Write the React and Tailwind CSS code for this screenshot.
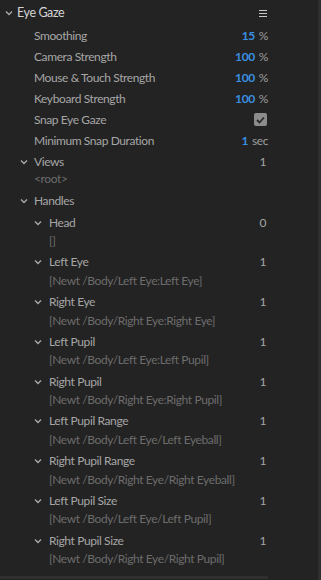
import React from 'react';

const Chevron = () => (
  <svg width="8" height="6" viewBox="0 0 8 6" className="shrink-0">
    <path d="M1 1.5 L4 4.5 L7 1.5" fill="none" stroke="#a8a8a8" strokeWidth="1.4" />
  </svg>
);

const params = [
  { label: 'Smoothing', value: '15', unit: '%' },
  { label: 'Camera Strength', value: '100', unit: '%' },
  { label: 'Mouse & Touch Strength', value: '100', unit: '%' },
  { label: 'Keyboard Strength', value: '100', unit: '%' },
  { label: 'Snap Eye Gaze', check: true },
  { label: 'Minimum Snap Duration', value: '1', unit: 'sec' },
];

const handles = [
  { name: 'Head', count: '0', path: '[]' },
  { name: 'Left Eye', count: '1', path: '[Newt /Body/Left Eye:Left Eye]' },
  { name: 'Right Eye', count: '1', path: '[Newt /Body/Right Eye:Right Eye]' },
  { name: 'Left Pupil', count: '1', path: '[Newt /Body/Left Eye:Left Pupil]' },
  { name: 'Right Pupil', count: '1', path: '[Newt /Body/Right Eye:Right Pupil]' },
  { name: 'Left Pupil Range', count: '1', path: '[Newt /Body/Left Eye/Left Eyeball]' },
  { name: 'Right Pupil Range', count: '1', path: '[Newt /Body/Right Eye/Right Eyeball]' },
  { name: 'Left Pupil Size', count: '1', path: '[Newt /Body/Left Eye/Left Pupil]' },
  { name: 'Right Pupil Size', count: '1', path: '[Newt /Body/Right Eye/Right Pupil]' },
];

export default function App() {
  return (
    <div className="w-[321px] h-[580px] bg-[#232323] flex overflow-hidden text-[12px] tracking-[-0.4px] text-[#a6a6a6]" style={{ fontFamily: 'Lato, "Open Sans", sans-serif' }}>
      <div className="flex-1 flex flex-col">
        <div className="flex-1 pr-[50px]">
          {/* Header */}
          <div className="h-[24px] flex items-center pl-[5px] mt-[1px]">
            <Chevron />
            <span className="ml-[4px] text-[#d4d4d4] text-[12.5px]">Eye Gaze</span>
            <div className="ml-auto flex flex-col gap-[2px] w-[8px] mr-[1px]">
              <div className="h-px bg-[#c8c8c8]" />
              <div className="h-px bg-[#c8c8c8]" />
              <div className="h-px bg-[#c8c8c8]" />
            </div>
          </div>

          {/* Params */}
          {params.map((p) => (
            <div key={p.label} className="h-[21px] flex items-center pl-[34px]">
              <span>{p.label}</span>
              <div className="ml-auto flex items-center">
                {p.check ? (
                  <div className="w-[13px] h-[13px] rounded-[2px] bg-[#8c8c8c] flex items-center justify-center mr-[1px]">
                    <svg width="9" height="8" viewBox="0 0 9 8">
                      <path d="M1 4 L3.5 6.5 L8 1.5" fill="none" stroke="#2a2a2a" strokeWidth="1.8" />
                    </svg>
                  </div>
                ) : (
                  <>
                    <span className="text-[#3a8fe0] font-bold">{p.value}</span>
                    <span className="ml-[4px] text-[#9e9e9e]">{p.unit}</span>
                  </>
                )}
              </div>
            </div>
          ))}

          {/* Views */}
          <div className="h-[20px] flex items-center pl-[20px] mt-[1px]">
            <Chevron />
            <span className="ml-[6px]">Views</span>
            <span className="ml-auto mr-[2px]">1</span>
          </div>
          <div className="h-[14px] flex items-center pl-[34px] text-[#6c6c6c]">&lt;root&gt;</div>

          {/* Handles */}
          <div className="h-[22px] flex items-center pl-[20px] mt-[4px]">
            <Chevron />
            <span className="ml-[6px]">Handles</span>
          </div>

          {handles.map((h) => (
            <div key={h.name} className="pb-[3px]">
              <div className="h-[21px] flex items-center pl-[34px]">
                <Chevron />
                <span className="ml-[7px]">{h.name}</span>
                <span className="ml-auto mr-[2px]">{h.count}</span>
              </div>
              <div className="h-[15.8px] flex items-center pl-[49px] text-[#6c6c6c]">{h.path}</div>
            </div>
          ))}
        </div>
        <div className="h-[3px] w-[268px] bg-[#2f2f2f] mb-[1px]" />
      </div>
      <div className="w-[3px] bg-[#2f2f2f]" />
    </div>
  );
}
